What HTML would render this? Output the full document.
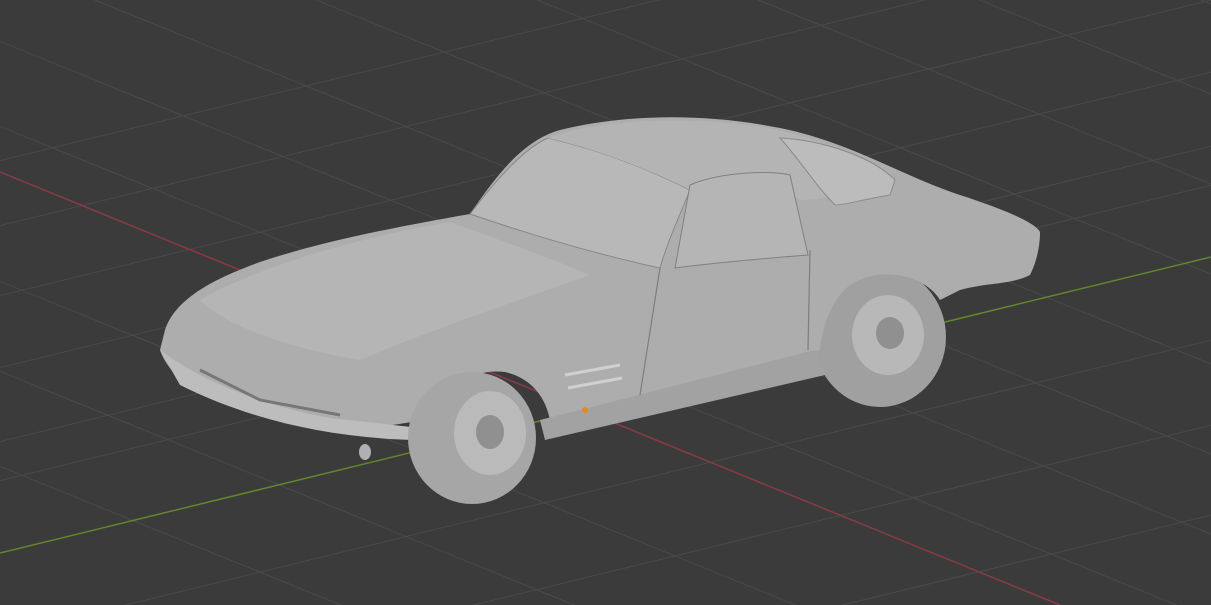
<!DOCTYPE html>
<html><head><meta charset="utf-8"><style>
html,body{margin:0;padding:0;background:#3b3b3b;overflow:hidden;width:1211px;height:605px}
svg{display:block;overflow:hidden}
</style></head><body>
<svg width="1211" height="605" viewBox="0 0 1211 605" overflow="hidden" xmlns="http://www.w3.org/2000/svg">
<defs><clipPath id="c"><rect width="1211" height="605"/></clipPath></defs>
<g clip-path="url(#c)">
<rect width="1211" height="605" fill="#3b3b3b"/>
<g stroke="#4a4a4a" stroke-width="1" fill="none">
<line x1="-200" y1="-120" x2="1400" y2="531"/>
<line x1="-200" y1="-40" x2="1400" y2="611"/>
<line x1="-200" y1="45" x2="1400" y2="696"/>
<line x1="-200" y1="200" x2="1400" y2="851"/>
<line x1="-200" y1="290" x2="1400" y2="941"/>
<line x1="-200" y1="385" x2="1400" y2="1036"/>
<line x1="-200" y1="-210" x2="1400" y2="441"/>
<line x1="-200" y1="-300" x2="1400" y2="351"/>
<line x1="-200" y1="-390" x2="1400" y2="261"/>
<line x1="-200" y1="-480" x2="1400" y2="171"/>
<line x1="-200" y1="-570" x2="1400" y2="81"/>
<line x1="-200" y1="-660" x2="1400" y2="-9"/>
<line x1="-100" y1="250" x2="1400" y2="-116"/>
<line x1="-100" y1="320" x2="1400" y2="-46"/>
<line x1="-100" y1="392" x2="1400" y2="26"/>
<line x1="-100" y1="466" x2="1400" y2="100"/>
<line x1="-100" y1="505" x2="1400" y2="139"/>
<line x1="-100" y1="660" x2="1400" y2="294"/>
<line x1="-100" y1="745" x2="1400" y2="379"/>
<line x1="-100" y1="835" x2="1400" y2="469"/>
<line x1="-100" y1="930" x2="1400" y2="564"/>
<line x1="-100" y1="1030" x2="1400" y2="664"/>
<line x1="-100" y1="185" x2="1400" y2="-181"/>
</g>
<line x1="0" y1="172" x2="1060" y2="605" stroke="#8a3a44" stroke-width="1.5"/>
<line x1="0" y1="553" x2="1211" y2="257" stroke="#62852e" stroke-width="1.5"/>

<ellipse cx="880" cy="337" rx="66" ry="70" fill="#a0a0a0"/>
<ellipse cx="888" cy="335" rx="36" ry="40" fill="#b8b8b8"/>
<ellipse cx="890" cy="333" rx="14" ry="16" fill="#909090"/>
<path d="M165,330 C175,300 210,280 260,262 C320,242 390,228 470,214 C500,170 525,140 560,130 C620,115 700,112 780,128 C850,142 900,175 960,195 C1000,208 1035,222 1040,232 C1040,250 1035,265 1030,275 C1010,285 990,282 960,290 L940,300 C925,275 880,265 850,285 C830,300 822,330 820,350 L550,420 C545,395 530,378 505,372 C470,368 440,390 425,420 L360,430 C300,420 250,410 210,395 C180,385 165,365 160,350 Z" fill="#adadad"/>
<path d="M540,420 L815,350 L825,375 L545,440 Z" fill="#a2a2a2"/>
<path d="M200,300 C260,265 370,235 450,222 C500,240 560,262 590,275 C520,300 430,330 360,360 C300,350 230,330 200,300 Z" fill="#b5b5b5"/>
<path d="M470,214 C500,175 525,148 548,138 C600,150 650,170 690,190 C680,215 668,240 660,268 C600,255 540,238 470,214 Z" fill="#b8b8b8" stroke="#888" stroke-width="1"/>
<path d="M548,138 C600,118 700,115 780,130 C820,140 860,155 890,175 C860,190 830,200 800,200 C760,180 720,172 690,190 C650,170 600,150 548,138 Z" fill="#b4b4b4"/>
<path d="M690,185 C720,172 770,170 790,175 L808,255 C770,258 720,262 675,268 Z" fill="#b5b5b5" stroke="#808080" stroke-width="1"/>
<path d="M780,138 C820,140 870,155 895,180 L890,195 C860,200 845,205 835,205 C815,185 800,160 780,138 Z" fill="#bcbcbc" stroke="#8a8a8a" stroke-width="1"/>
<path d="M660,268 L640,395 M810,250 L808,350" stroke="#7e7e7e" stroke-width="1.2" fill="none"/>
<path d="M160,350 C200,380 260,405 330,418 L420,428 L415,440 C330,438 250,420 180,385 Z" fill="#bdbdbd"/>
<path d="M200,370 L260,400 L340,415" stroke="#777" stroke-width="3" fill="none"/>
<path d="M565,375 L620,365 M568,388 L622,378" stroke="#d0d0d0" stroke-width="3"/>
<ellipse cx="472" cy="438" rx="64" ry="66" fill="#a6a6a6"/>
<ellipse cx="490" cy="433" rx="36" ry="42" fill="#bababa"/>
<ellipse cx="490" cy="432" rx="14" ry="17" fill="#909090"/>
<ellipse cx="365" cy="452" rx="6" ry="8" fill="#b0b0b0"/>
<circle cx="585" cy="410" r="3" fill="#e58b1e"/>
</g>
</svg>
</body></html>
